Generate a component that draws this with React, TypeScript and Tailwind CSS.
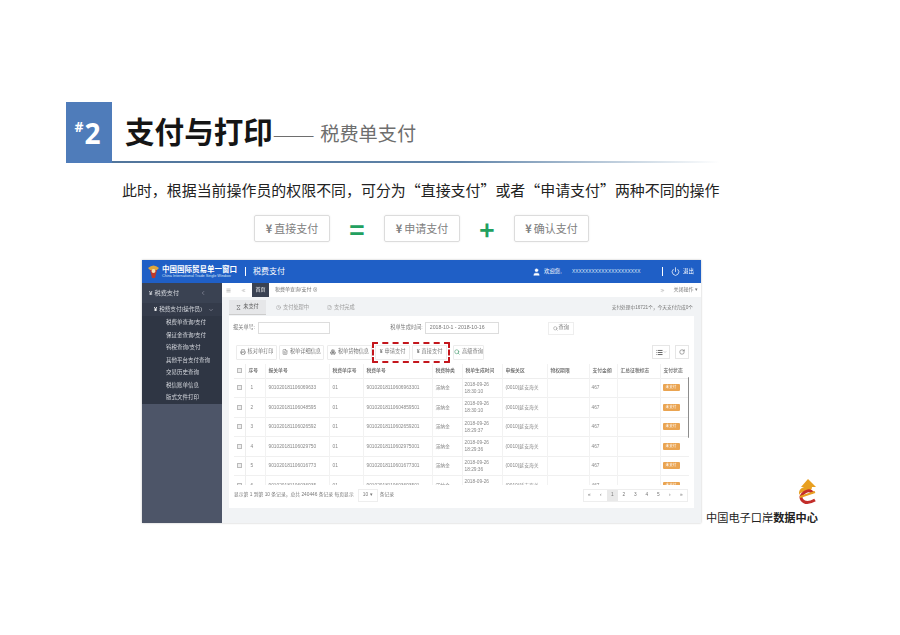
import {
  ChevronDown,
  ChevronLeft,
  ChevronsLeft,
  ChevronsRight,
  Hourglass,
  List,
  Menu,
  Power,
  Printer,
  RotateCw,
  Search,
  Boxes,
  FileText,
  User,
  Clock,
  FileCheck,
} from "lucide-react";

const rows = [
  ["1", "901020181106069633", "01", "90102018110606963301", "2018-09-26", "18:30:10"],
  ["2", "901020181106048595", "01", "90102018110604859501", "2018-09-26", "18:30:10"],
  ["3", "901020181106026592", "01", "90102018110602659201", "2018-09-26", "18:29:37"],
  ["4", "901020181106029750", "01", "90102018110602975001", "2018-09-26", "18:29:36"],
  ["5", "901020181106016773", "01", "90102018110601677301", "2018-09-26", "18:29:36"],
  ["6", "901020181106036935", "01", "90102018110603693501", "2018-09-26", "18:29:36"],
];

const menu = ["税费单查询/支付", "保证金查询/支付", "钨税查询/支付", "其他平台支付查询", "交易历史查询", "税信账单信息", "版式文件打印"];

const headers = ["序号", "报关单号", "税费单序号", "税费单号", "税费种类", "税单生成时间", "申报关区", "物权期限", "支付金额", "汇总征税标志", "支付状态"];

const BigButton = ({ label, wide }: { label: string; wide?: boolean }) => (
  <div
    className={`${wide ? "w-[76px]" : "w-[75px]"} h-[27px] flex items-center justify-center gap-[2px] border border-[#dcdcdc] rounded-[2px] text-[11px] text-[#808080] shadow-[0_0_2px_rgba(0,0,0,0.08)]`}
  >
    <span className="font-bold">¥</span>
    {label}
  </div>
);

const ToolButton = ({ icon, label, w }: { icon: React.ReactNode; label: string; w: string }) => (
  <div className={`${w} h-[15px] flex items-center justify-center gap-[2px] border border-[#ececec] rounded-[1px] text-[5.2px] text-[#777]`}>
    {icon}
    {label}
  </div>
);

const App = () => {
  return (
    <div lang="zh-CN" className="w-[900px] h-[635px] bg-white overflow-hidden font-['Noto_Sans_CJK_SC',sans-serif]">
      <div className="pt-[102px] pl-[66px]">
        <div className="w-[654px] h-[61px] flex bg-[linear-gradient(90deg,#4f739a,#5f83a8_60%,#dfe7ee_92%,#ffffff)] pb-[2px]">
          <div className="w-[46px] pr-[3px] bg-[#4f7cba] flex items-center justify-center gap-[1px] text-white font-bold -mb-[2px] font-['Open_Sans',sans-serif]">
            <span className="text-[14px] leading-none -mt-[12px]">#</span>
            <span className="text-[28px] leading-none">2</span>
          </div>
          <div className="flex-1 bg-white flex items-center pl-[13px]">
            <span className="text-[29.6px] font-bold text-[#151515] leading-none -mt-[1px]">支付与打印</span>
            <span className="text-[16.8px] text-[#6e6e6e] leading-none mr-[6px] mt-[5px]">———</span>
            <span className="text-[19.2px] text-[#6e6e6e] leading-none mt-[5px]">税费单支付</span>
          </div>
        </div>
      </div>

      <div className="mt-[17px] pl-[122px] text-[14.95px] leading-[20px] text-[#222] whitespace-nowrap">
        此时，根据当前操作员的权限不同，可分为“直接支付”或者“申请支付”两种不同的操作
      </div>

      <div className="mt-[15px] pl-[254px] flex items-center">
        <BigButton label="直接支付" wide />
        <span className="w-[54px] h-[27px] flex items-center justify-center text-[26px] leading-none font-bold text-[#22a05f]">=</span>
        <BigButton label="申请支付" wide />
        <span className="w-[54px] h-[27px] flex items-center justify-center text-[26px] leading-none font-bold text-[#22a05f]">+</span>
        <BigButton label="确认支付" />
      </div>

      <div className="relative">
        <div className="absolute left-[706px] top-[268px] text-[11.2px] leading-[14px] text-[#222] whitespace-nowrap">
          中国电子口岸<span className="font-bold">数据中心</span>
        </div>
        <svg className="absolute left-[797px] top-[237px]" width="20" height="26" viewBox="0 0 20 26">
          <path d="M11 0 L19 8 L15 8 Q15 13 8 13 Q3 13 2 16 Q1 10 7 8 L4 8 Z" fill="#e8a021" />
          <path d="M16 14 Q13 10 8 13 Q2 17 5 21 Q9 26 18 21" fill="none" stroke="#c22d2a" strokeWidth="3" />
          <path d="M3 18 L18 13" fill="none" stroke="#e8a021" strokeWidth="2" />
        </svg>
      </div>

      <div className="ml-[142px] mt-[18px] w-[559px] h-[263px] flex flex-col blur-[0.3px] shadow-[0_0_2px_rgba(0,0,0,0.25)] font-['Liberation_Sans','Noto_Sans_CJK_SC',sans-serif]">
        <div className="h-[23px] bg-[#1f5fc6] flex items-center text-white shrink-0 whitespace-nowrap">
          <svg className="ml-[5px]" width="13" height="15" viewBox="0 0 13 15">
            <path d="M1 4 Q6.5 -1 12 4 L10 6 H3 Z" fill="#e0a63a" />
            <path d="M3 6 H10 L8 14 H5 Z" fill="#c0392b" />
            <circle cx="6.5" cy="7" r="2" fill="#f3e2b8" />
          </svg>
          <div className="ml-[2px] w-[78px]">
            <div className="text-[7.5px] leading-[9px] font-bold">中国国际贸易单一窗口</div>
            <div className="text-[3.8px] leading-[5px] text-[#d5e2f5]">China International Trade Single Window</div>
          </div>
          <span className="w-px h-[9px] bg-white ml-[5px]" />
          <span className="ml-[7px] text-[8px] leading-none">税费支付</span>
          <User className="ml-[247px] w-[9px] h-[10px] text-white" fill="white" strokeWidth={1} />
          <span className="ml-[3px] w-[17px] text-[5.4px]">欢迎您,</span>
          <span className="ml-[11px] w-[69px] text-[4.9px] text-[#dbe6f7]">XXXXXXXXXXXXXXXXXXXXX</span>
          <span className="w-px h-[9px] bg-white ml-[21px]" />
          <Power className="ml-[8px] w-[9px] h-[9px]" strokeWidth={2} />
          <span className="ml-[3px] text-[5.4px]">退出</span>
        </div>

        <div className="flex-1 flex min-h-0">
          <div className="w-[80px] shrink-0 bg-[#4d5568] flex flex-col">
            <div className="bg-[#3a4252] text-[#d4d7dd]">
              <div className="h-[20px] flex items-center pl-[7px] text-[6.2px]">
                <span className="font-bold">¥</span>
                <span className="ml-[2px]">税费支付</span>
                <ChevronLeft className="ml-[21px] w-[6px] h-[6px] text-[#aab]" />
              </div>
              <div className="h-[13px] flex items-center pl-[12px] text-[5.6px] bg-[#343b4a]">
                <span className="font-bold text-white">¥</span>
                <span className="ml-[2px] whitespace-nowrap">税费支付(操作员)</span>
                <ChevronDown className="ml-[6px] w-[6px] h-[6px] text-[#aab]" />
              </div>
              <div className="bg-[#2f3644] pl-[24px]">
                {menu.map((item) => (
                  <div key={item} className="h-[12.5px] flex items-center text-[5.5px] whitespace-nowrap">
                    {item}
                  </div>
                ))}
              </div>
            </div>
          </div>

          <div className="flex-1 min-w-0 bg-[#f1f3f5] flex flex-col text-[#777]">
            <div className="h-[14px] bg-white flex items-center shrink-0 text-[5px]">
              <Menu className="ml-[4px] w-[5px] h-[5px]" />
              <ChevronsLeft className="ml-[10px] w-[5px] h-[5px]" />
              <span className="ml-[6px] w-[17px] h-full bg-[#3a4252] text-white flex items-center justify-center">首页</span>
              <span className="ml-[6px] whitespace-nowrap">税费单查询/支付 ⊗</span>
              <div className="flex-1" />
              <ChevronsRight className="w-[5px] h-[5px]" />
              <span className="ml-[9px] mr-[3px] whitespace-nowrap">关闭操作 ▾</span>
            </div>

            <div className="h-[15px] mt-[3px] flex items-end pl-[7px] pr-[8px] text-[5.2px] shrink-0">
              <div className="w-[37px] h-[15px] bg-[#e6e7e9] border-b border-[#ccc] flex items-center justify-center gap-[2px] text-[#555]">
                <Hourglass className="w-[5px] h-[5px]" />
                未支付
              </div>
              <div className="ml-[10px] h-[15px] flex items-center gap-[2px] text-[#999]">
                <Clock className="w-[5px] h-[5px]" />
                支付处理中
              </div>
              <div className="ml-[18px] h-[15px] flex items-center gap-[2px] text-[#999]">
                <FileCheck className="w-[5px] h-[5px]" />
                支付完成
              </div>
              <div className="flex-1" />
              <span className="h-[15px] flex items-center text-[4.7px] whitespace-nowrap">支付处理中16721个，今天支付完成0个</span>
            </div>

            <div className="mx-[7px] mt-px h-[192px] bg-white pl-[7px] pr-[5px] flex flex-col shrink-0">
              <div className="h-[24px] flex items-center text-[5.2px] shrink-0 -ml-[3px]">
                <span>报关单号:</span>
                <div className="ml-[3px] w-[72px] h-[12px] border border-[#ddd]" />
                <span className="ml-[60px]">税单生成时间:</span>
                <div className="ml-[2px] w-[74px] h-[12px] border border-[#ddd] flex items-center pl-[4px] whitespace-nowrap">2018-10-1 - 2018-10-16</div>
                <div className="ml-[49px] w-[26px] h-[13px] border border-[#eee] flex items-center justify-center gap-[1px]">
                  <Search className="w-[5px] h-[5px]" />
                  查询
                </div>
              </div>

              <div className="h-[24px] flex items-center shrink-0">
                <ToolButton w="w-[41px]" icon={<Printer className="w-[6px] h-[6px]" />} label="核对单打印" />
                <div className="w-[2px]" />
                <ToolButton w="w-[45px]" icon={<FileText className="w-[6px] h-[6px]" />} label="税单详细信息" />
                <div className="w-[3px]" />
                <ToolButton w="w-[45px]" icon={<Boxes className="w-[6px] h-[6px]" />} label="税单货物信息" />
                <div className="w-[78px] h-[21px] border-2 border-dashed border-[#c4161c] rounded-[1px] flex items-center justify-center gap-[2px]">
                  <ToolButton w="w-[35px]" icon={<span className="font-bold">¥</span>} label="申请支付" />
                  <ToolButton w="w-[35px]" icon={<span className="font-bold">¥</span>} label="直接支付" />
                </div>
                <div className="w-[3px]" />
                <ToolButton w="w-[31px]" icon={<Search className="w-[6px] h-[6px] text-[#2a8a5a]" />} label="高级查询" />
                <div className="flex-1" />
                <div className="w-[18px] h-[14px] border border-[#e6e6e6] flex items-center justify-center">
                  <List className="w-[7px] h-[7px] text-[#555]" strokeWidth={3} />
                  <ChevronDown className="w-[4px] h-[4px]" />
                </div>
                <div className="ml-[5px] w-[14px] h-[14px] border border-[#e6e6e6] flex items-center justify-center">
                  <RotateCw className="w-[6px] h-[6px] text-[#555]" />
                </div>
              </div>

              <div className="relative h-[121px] overflow-hidden shrink-0 -ml-[2px]">
                <table className="w-[456px] table-fixed border-collapse text-[4.8px] leading-[7px]">
                  <thead>
                    <tr className="h-[14px] border-b border-[#eee] text-[#666]">
                      <th className="w-[11px] border-r border-[#eee] font-normal">
                        <div className="mx-auto w-[5px] h-[5px] border border-[#bbb] bg-[#eee]" />
                      </th>
                      {headers.map((h, i) => (
                        <th
                          key={h}
                          className={`${["w-[20px]", "w-[64px]", "w-[34px]", "w-[69px]", "w-[30px]", "w-[40px]", "w-[45px]", "w-[42px]", "w-[28px]", "w-[43px]", "w-[30px]"][i]} border-r border-[#f2f2f2] text-left pl-[3px] font-medium whitespace-nowrap`}
                        >
                          {h}
                        </th>
                      ))}
                    </tr>
                  </thead>
                  <tbody>
                    {rows.map((r) => (
                      <tr key={r[0]} className="h-[19.5px] border-b border-[#f0f0f0] text-[#888]">
                        <td className="border-r border-[#eee]">
                          <div className="mx-auto w-[5px] h-[5px] border border-[#bbb] bg-[#eee]" />
                        </td>
                        <td className="border-r border-[#f2f2f2] pl-[5px]">{r[0]}</td>
                        <td className="border-r border-[#f2f2f2] pl-[3px] whitespace-nowrap">{r[1]}</td>
                        <td className="border-r border-[#f2f2f2] pl-[3px]">{r[2]}</td>
                        <td className="border-r border-[#f2f2f2] pl-[3px] whitespace-nowrap">{r[3]}</td>
                        <td className="border-r border-[#f2f2f2] pl-[3px] whitespace-nowrap">滞纳金</td>
                        <td className="border-r border-[#f2f2f2] pl-[2px] whitespace-nowrap">
                          {r[4]}
                          <br />
                          {r[5]}
                        </td>
                        <td className="border-r border-[#f2f2f2] pl-[3px] whitespace-nowrap">(0010)延安海关</td>
                        <td className="border-r border-[#f2f2f2]" />
                        <td className="border-r border-[#f2f2f2] pl-[2px]">467</td>
                        <td className="border-r border-[#f2f2f2]" />
                        <td className="pl-[2px]">
                          <div className="w-[17px] h-[7px] bg-[#eaa451] rounded-[1px] text-white text-[3.6px] leading-[7px] text-center">未支付</div>
                        </td>
                      </tr>
                    ))}
                  </tbody>
                </table>
                <div className="absolute left-[454px] top-[13px] w-[2px] h-[61px] bg-[#8d8d8d] rounded-full" />
              </div>

              <div className="flex items-center h-[14px] mt-[3px] text-[4.8px] whitespace-nowrap -ml-[2px] shrink-0">
                <span>显示第 1 到第 10 条记录，总共 240446 条记录 每页显示</span>
                <div className="ml-[4px] w-[20px] h-[13px] border border-[#eee] flex items-center justify-center">10 ▾</div>
                <span className="ml-[2px]">条记录</span>
                <div className="flex-1" />
                <div className="flex h-[13px] border border-[#eee] mr-[1px]">
                  {["«", "‹", "1", "2", "3", "4", "5", "›", "»"].map((p) => (
                    <span
                      key={p}
                      className={`w-[11.5px] flex items-center justify-center ${p === "1" ? "bg-[#e9e9e9]" : ""}`}
                    >
                      {p}
                    </span>
                  ))}
                </div>
              </div>
            </div>
          </div>
        </div>
      </div>
    </div>
  );
};

export default App;
